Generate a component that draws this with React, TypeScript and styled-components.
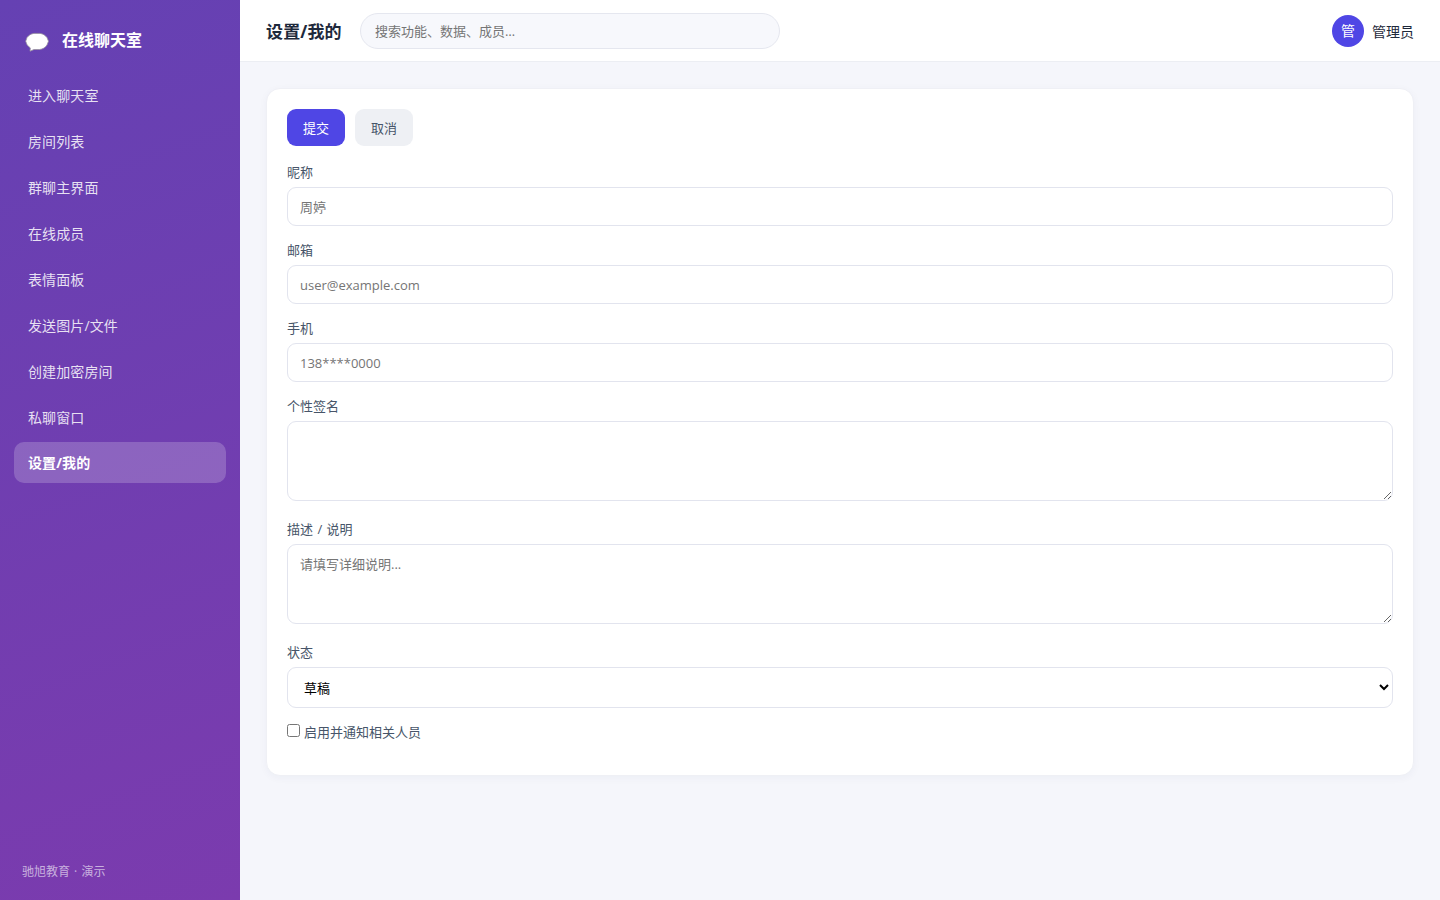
import React from "react";
import styled, { createGlobalStyle } from "styled-components";

const GlobalStyle = createGlobalStyle`
  *, *::before, *::after { box-sizing: border-box; }
  body {
    margin: 0;
    background: #f5f6fb;
    color: #1e293b;
    font: 14px/20px "Open Sans", "Noto Sans CJK SC", sans-serif;
  }
  button, input, textarea, select { font-family: inherit; }
`;

const Shell = styled.div`
  display: flex;
  height: 100vh;
  overflow: hidden;
`;

const Sidebar = styled.aside`
  display: flex;
  flex-direction: column;
  flex: 0 0 240px;
  padding: 22px 14px 18px;
  color: #fff;
  background: linear-gradient(160deg, #6541b3 0%, #7b3bae 100%);
`;

const Brand = styled.div`
  display: flex;
  align-items: center;
  gap: 13px;
  height: 36px;
  margin-bottom: 16px;
  padding-left: 11px;
  font-size: 16px;
  font-weight: 700;
`;

const BubbleIcon = styled.svg`
  width: 24px;
  height: 20px;
  margin-top: 4px;
`;

const Nav = styled.nav`
  display: flex;
  flex-direction: column;
  gap: 5px;
`;

const NavItem = styled.a<{ $active?: boolean }>`
  height: 41px;
  padding: ${(p) => (p.$active ? "0 14px" : "1px 14px 0")};
  border-radius: 10px;
  line-height: 41px;
  letter-spacing: 0.1px;
  color: ${(p) => (p.$active ? "#fff" : "rgba(255, 255, 255, 0.85)")};
  font-weight: ${(p) => (p.$active ? 700 : 400)};
  background: ${(p) => (p.$active ? "rgba(255, 255, 255, 0.2)" : "transparent")};
`;

const SidebarFooter = styled.div`
  margin-top: auto;
  padding-left: 8px;
  font-size: 12px;
  word-spacing: 1px;
  color: rgba(255, 255, 255, 0.6);
`;

const Main = styled.main`
  flex: 1;
  min-width: 0;
`;

const TopBar = styled.header`
  display: flex;
  align-items: center;
  height: 62px;
  padding: 0 26px;
  background: #fff;
  border-bottom: 1px solid #eceef3;
`;

const PageTitle = styled.h1`
  margin: 0 18px 0 0;
  padding-top: 2px;
  width: 76px;
  white-space: nowrap;
  font-size: 17px;
  line-height: 24px;
  font-weight: 700;
  letter-spacing: 0.15px;
`;

const Search = styled.input`
  width: 420px;
  height: 36px;
  padding: 0 14px;
  border: 1px solid #e5e7ef;
  border-radius: 18px;
  font-size: 13px;
  background: #f7f8fc;
  &::placeholder { color: #757575; }
`;

const User = styled.div`
  display: flex;
  align-items: center;
  gap: 8px;
  margin-left: auto;
`;

const UserName = styled.span`
  padding-top: 2px;
`;

const Avatar = styled.span`
  width: 32px;
  height: 32px;
  border-radius: 50%;
  line-height: 32px;
  text-align: center;
  color: #fff;
  background: #4f46e5;
`;

const Card = styled.section`
  margin: 26px;
  padding: 20px;
  border: 1px solid #eff0f5;
  border-radius: 14px;
  background: #fff;
  box-shadow: 0 2px 8px rgba(30, 41, 90, 0.04);
`;

const Actions = styled.div`
  display: flex;
  gap: 10px;
  margin-bottom: 16px;
`;

const Button = styled.button<{ $primary?: boolean }>`
  width: 58px;
  height: 37px;
  padding: 0;
  border: 0;
  border-radius: 9px;
  font-size: 13px;
  color: ${(p) => (p.$primary ? "#fff" : "#475569")};
  background: ${(p) => (p.$primary ? "#4f46e5" : "#eef0f4")};
`;

const Field = styled.div`
  margin-bottom: 14px;
`;

const Label = styled.label`
  display: block;
  height: 19px;
  margin-bottom: 6px;
  font-size: 13px;
  line-height: 20px;
  word-spacing: 1px;
  color: #475569;
`;

const Input = styled.input`
  display: block;
  width: 100%;
  height: 39px;
  padding: 0 12px;
  border: 1px solid #e2e4ee;
  border-radius: 9px;
  font-size: 13px;
  background: #fff;
  &::placeholder { color: #757575; }
`;

const TextArea = styled.textarea`
  display: block;
  width: 100%;
  height: 80px;
  margin-bottom: 18px;
  padding: 9px 12px;
  border: 1px solid #e2e4ee;
  border-radius: 9px;
  font-size: 13px;
  line-height: 20px;
  resize: vertical;
  background: #fff;
  &::placeholder { color: #757575; }
`;

const Select = styled.select`
  display: block;
  width: 100%;
  height: 41px;
  padding: 0 12px;
  border: 1px solid #e2e4ee;
  border-radius: 9px;
  font-size: 13px;
  color: #000;
  background: #fff;
`;

const CheckLabel = styled.label`
  display: flex;
  height: 19px;
  gap: 4px;
  margin-bottom: 14px;
  font-size: 13px;
  line-height: 20px;
  color: #475569;
`;

const Checkbox = styled.input`
  width: 13px;
  height: 13px;
  margin: 2px 0 0;
`;

const navItems = [
  "进入聊天室",
  "房间列表",
  "群聊主界面",
  "在线成员",
  "表情面板",
  "发送图片/文件",
  "创建加密房间",
  "私聊窗口",
  "设置/我的",
];

const contactFields = [
  { label: "昵称", placeholder: "周婷" },
  { label: "邮箱", placeholder: "user@example.com" },
  { label: "手机", placeholder: "138****0000" },
];

export default function App() {
  return (
    <>
      <GlobalStyle />
      <Shell>
        <Sidebar>
          <Brand>
            <BubbleIcon viewBox="0 0 24 20" aria-hidden="true">
              <path
                d="M9 1.4h6c3.200.4 5.600 2 7 4.200l1.500 3.600-1.500 3.800c-1.600 2.600-4.200 4.200-7.500 4.500H9l-4 1.700.3-3.300-3.200-3L.7 9.200 2 5.600C3.400 3.400 5.800 1.800 9 1.400Z"
                fill="#fff"
                stroke="#97909f"
                strokeWidth=".8"
              />
            </BubbleIcon>
            <span>在线聊天室</span>
          </Brand>
          <Nav>
            {navItems.map((item) => (
              <NavItem key={item} $active={item === "设置/我的"}>
                {item}
              </NavItem>
            ))}
          </Nav>
          <SidebarFooter>驰旭教育 · 演示</SidebarFooter>
        </Sidebar>
        <Main>
          <TopBar>
            <PageTitle>设置/我的</PageTitle>
            <Search placeholder="搜索功能、数据、成员…" />
            <User>
              <Avatar>管</Avatar>
              <UserName>管理员</UserName>
            </User>
          </TopBar>
          <Card>
            <Actions>
              <Button $primary>提交</Button>
              <Button>取消</Button>
            </Actions>
            {contactFields.map((f) => (
              <Field key={f.label}>
                <Label>{f.label}</Label>
                <Input placeholder={f.placeholder} />
              </Field>
            ))}
            <Field>
              <Label>个性签名</Label>
              <TextArea />
            </Field>
            <Field>
              <Label>描述 / 说明</Label>
              <TextArea placeholder="请填写详细说明..." />
            </Field>
            <Field>
              <Label>状态</Label>
              <Select defaultValue="草稿">
                <option>草稿</option>
              </Select>
            </Field>
            <CheckLabel>
              <Checkbox type="checkbox" />
              启用并通知相关人员
            </CheckLabel>
          </Card>
        </Main>
      </Shell>
    </>
  );
}
